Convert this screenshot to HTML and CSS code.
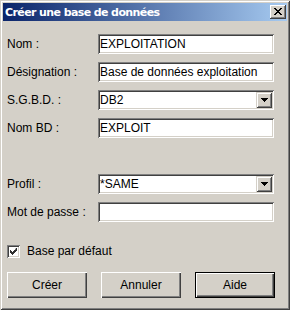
FILE: index.html
```html
<!DOCTYPE html>
<html>
<head>
<meta charset="utf-8">
<link rel="stylesheet" href="styles.css">
</head>
<body>
<div class="window">
  <div class="titlebar">
    <span class="title">Créer une base de données</span>
    <span class="close"><svg width="8" height="7" viewBox="0 0 8 7"><path d="M0 0h2v1h-2zM6 0h2v1h-2zM1 1h2v1h-2zM5 1h2v1h-2zM2 2h4v1h-4zM3 3h2v1h-2zM2 4h4v1h-4zM1 5h2v1h-2zM5 5h2v1h-2zM0 6h2v1h-2zM6 6h2v1h-2z" fill="#000"/></svg></span>
  </div>
  <div class="form">
    <label class="lbl">Nom :</label>
    <div class="field">EXPLOITATION</div>
    <label class="lbl">Désignation :</label>
    <div class="field">Base de données exploitation</div>
    <label class="lbl">S.G.B.D. :</label>
    <div class="field combo">DB2<span class="arrow"><svg width="7" height="4" viewBox="0 0 7 4"><path d="M0 0h7v1h-1v1h-1v1h-1v1h-1v-1h-1v-1h-1v-1h-1z" fill="#000"/></svg></span></div>
    <label class="lbl">Nom BD :</label>
    <div class="field">EXPLOIT</div>
    <div class="spacer"></div>
    <label class="lbl">Profil :</label>
    <div class="field combo">*SAME<span class="arrow"><svg width="7" height="4" viewBox="0 0 7 4"><path d="M0 0h7v1h-1v1h-1v1h-1v1h-1v-1h-1v-1h-1v-1h-1z" fill="#000"/></svg></span></div>
    <label class="lbl">Mot de passe :</label>
    <div class="field"></div>
  </div>
  <div class="check">
    <span class="box"><svg width="7" height="7" viewBox="0 0 7 7"><path d="M6 0h1v3h-1v1h-1v1h-1v1h-1v1h-1v-1h-1v-1h-1v-1h-1v-3h1v1h1v1h1v1h1v-1h1v-1h1z" fill="#303030"/></svg></span>
    <span>Base par défaut</span>
  </div>
  <div class="buttons">
    <div class="btn">Créer</div>
    <div class="btn">Annuler</div>
    <div class="btn default"><span>Aide</span></div>
  </div>
</div>
</body>
</html>
```
FILE: styles.css
```css
html, body {
  margin: 0;
  padding: 0;
  background: #d4d0c8;
}
.window {
  width: 290px;
  height: 310px;
  box-sizing: border-box;
  padding: 3px;
  background: #d4d0c8;
  box-shadow: inset 1px 1px #d4d0c8, inset -1px -1px #404040, inset 2px 2px #ffffff, inset -2px -2px #808080;
  font-family: "Liberation Sans", Arial, sans-serif;
  font-size: 12px;
  color: #000;
}
.titlebar {
  height: 18px;
  display: flex;
  align-items: center;
  justify-content: space-between;
  padding: 0 1px 0 2px;
  background: linear-gradient(to right, #0a246a, #a6caf0);
}
.title {
  color: #fff;
  font-family: "DejaVu Sans", sans-serif;
  font-weight: bold;
  font-size: 11px;
  letter-spacing: -0.6px;
}
.close {
  width: 16px;
  height: 14px;
  box-sizing: border-box;
  background: #d4d0c8;
  box-shadow: inset -1px -1px #404040, inset 1px 1px #ffffff, inset -2px -2px #808080;
  display: flex;
  align-items: center;
  justify-content: center;
  padding: 0 1px 1px 0;
}
.close svg { display: block; }
.form {
  display: grid;
  grid-template-columns: 91px 176px;
  row-gap: 8px;
  margin: 13px 0 0 4px;
  align-items: center;
}
.lbl {
  white-space: nowrap;
}
.field {
  height: 20px;
  box-sizing: border-box;
  background: #fff;
  box-shadow: inset 1px 1px #808080, inset -1px -1px #ffffff, inset 2px 2px #404040, inset -2px -2px #d4d0c8;
  padding: 0 2px 0 2px;
  display: flex;
  align-items: center;
  white-space: nowrap;
  overflow: hidden;
}
.combo {
  justify-content: space-between;
  padding-right: 2px;
}
.arrow {
  width: 16px;
  height: 16px;
  box-sizing: border-box;
  background: #d4d0c8;
  box-shadow: inset 1px 1px #d4d0c8, inset -1px -1px #404040, inset 2px 2px #ffffff, inset -2px -2px #808080;
  display: flex;
  align-items: center;
  justify-content: center;
}
.arrow svg { display: block; }
.spacer {
  grid-column: 1 / 3;
  height: 20px;
}
.check {
  display: flex;
  align-items: center;
  gap: 7px;
  margin: 21px 0 0 4px;
  height: 16px;
}
.box {
  width: 13px;
  height: 13px;
  box-sizing: border-box;
  background: #fff;
  box-shadow: inset 1px 1px #808080, inset -1px -1px #ffffff, inset 2px 2px #404040, inset -2px -2px #d4d0c8;
  display: flex;
  align-items: center;
  justify-content: center;
}
.box svg { display: block; }
.buttons {
  display: flex;
  gap: 14px;
  margin: 13px 0 0 4px;
}
.btn {
  width: 80px;
  height: 26px;
  box-sizing: border-box;
  display: flex;
  align-items: center;
  justify-content: center;
  box-shadow: inset 1px 1px #ffffff, inset -1px -1px #404040, inset -2px -2px #808080;
}
.btn.default {
  box-shadow: inset 0 0 0 1px #000, inset 2px 2px #ffffff, inset -2px -2px #404040, inset -3px -3px #808080;
}
```
